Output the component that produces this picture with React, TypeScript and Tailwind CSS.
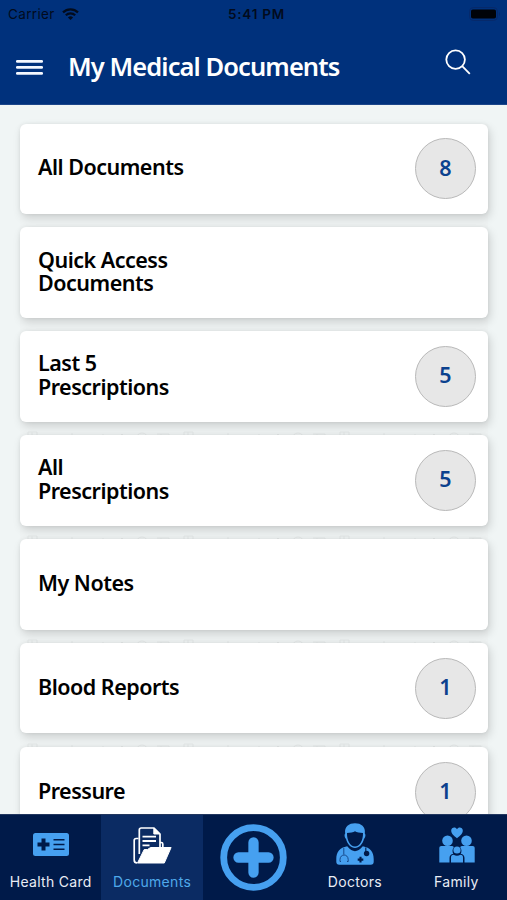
import { clsx } from "clsx";
import type { ReactNode } from "react";

type DocumentGroup = {
  lines: string[];
  count?: number;
};

const groups: DocumentGroup[] = [
  { lines: ["All Documents"], count: 8 },
  { lines: ["Quick Access", "Documents"] },
  { lines: ["Last 5", "Prescriptions"], count: 5 },
  { lines: ["All", "Prescriptions"], count: 5 },
  { lines: ["My Notes"] },
  { lines: ["Blood Reports"], count: 1 },
  { lines: ["Pressure"], count: 1 },
];

function StatusBar() {
  return (
    <div className="grid h-[28px] grid-cols-3 items-center pl-[8px] pr-[6px] font-['Inter','Liberation_Sans',sans-serif] text-[13.5px] text-[#020b1d]">
      <div className="flex items-center gap-[7px]">
        <span className="tracking-[0.35px]">Carrier</span>
        <svg width="17" height="12" viewBox="0 0 17 12" fill="none" stroke="#020b1d" strokeWidth="2.2">
          <path d="M1 4.4a10.8 10.8 0 0 1 15 0" />
          <path d="M3.8 7.2a6.8 6.8 0 0 1 9.4 0" />
          <path d="M8.5 12 5.9 9.4a3.8 3.8 0 0 1 5.2 0z" fill="#020b1d" stroke="none" />
        </svg>
      </div>
      <span className="pl-1 text-center font-semibold tracking-[0.75px]">5:41 PM</span>
      <svg className="justify-self-end" width="32" height="14" viewBox="0 0 32 14">
        <rect x="0.5" y="0.5" width="28" height="13" rx="4" fill="none" stroke="#06296a" />
        <rect x="2" y="2.5" width="25" height="9" rx="1.8" fill="#000308" />
        <path d="M30 5v4c1.3-.6 1.3-3.4 0-4z" fill="#06296a" />
      </svg>
    </div>
  );
}

function Header() {
  return (
    <header className="h-[105px] shrink-0 border-b border-[#1c468a] bg-[#00317c]">
      <StatusBar />
      <div className="flex h-[76px] items-center pl-4 pr-[36px]">
        <button className="mt-[2px]" aria-label="Menu">
          <svg width="27" height="15" viewBox="0 0 27 15" fill="#f4f8ff">
            <rect width="27" height="2.8" rx="1.2" />
            <rect y="6" width="27" height="2.8" rx="1.2" />
            <rect y="12" width="27" height="2.8" rx="1.2" />
          </svg>
        </button>
        <h1 className="ml-[25px] whitespace-nowrap text-[25.5px] font-semibold tracking-[-0.92px] text-white">
          My Medical Documents
        </h1>
        <button className="-mt-[8px] ml-auto" aria-label="Search">
          <svg width="26" height="26" viewBox="0 0 26 26" fill="none" stroke="white" strokeWidth="1.8">
            <circle cx="10.6" cy="10.6" r="9.3" />
            <path d="m17.2 17.2 7.6 7.6" />
          </svg>
        </button>
      </div>
    </header>
  );
}

// Faint medical line drawings that show between the lower cards
function Backdrop() {
  return (
    <svg className="absolute bottom-0 left-5" width="468" height="390" fill="none" stroke="#dde1e1">
      <defs>
        <pattern id="doodles" width="156" height="104" patternUnits="userSpaceOnUse">
          <path d="M8 8h9v14H8zM12 8v12M30 17l6-5 9 5M52 9v12M68 18h15v-8M94 18l8-8 7 8M137 10h12v12M141 10v10" />
          <circle cx="122" cy="15" r="6" />
        </pattern>
      </defs>
      <rect width="468" height="390" fill="url(#doodles)" stroke="none" />
    </svg>
  );
}

function DocumentCard({ group }: { group: DocumentGroup }) {
  return (
    <li className="flex h-[90.5px] shrink-0 items-center justify-between rounded-[6px] bg-white pl-[18px] pr-[12px] shadow-[0_0_4px_rgba(0,0,0,0.06),2px_4px_10px_rgba(0,0,0,0.15)]">
      <h2 className="-mt-[3.5px] text-[21.5px] font-semibold leading-[23.3px] tracking-[-0.5px] text-black">
        {group.lines.map((line) => (
          <span key={line} className="block whitespace-nowrap">
            {line}
          </span>
        ))}
      </h2>
      {group.count !== undefined && (
        <span className="flex size-[61px] items-center justify-center rounded-full border-[1.5px] border-[#b9b9b9] bg-[#e7e7e7] pb-[2px] text-[21.5px] font-semibold text-[#0b418e]">
          {group.count}
        </span>
      )}
    </li>
  );
}

function HealthCardIcon() {
  return (
    <svg className="-mt-[2px]" width="36" height="23" viewBox="0 0 36 23">
      <rect width="36" height="23" rx="2.5" fill="#46a0f0" />
      <path d="M10.5 5.5v12M4.5 11.5h12" stroke="#001a49" strokeWidth="4" />
      <path d="M20.5 6.8h11M20.5 11.5h11M20.5 16.2h11" stroke="#001a49" strokeWidth="1.5" />
    </svg>
  );
}

function DocumentsIcon() {
  return (
    <svg width="39" height="37" viewBox="0 0 39 37" fill="none" stroke="white" strokeWidth="1.7" strokeLinejoin="round">
      <path d="M5.5 11.5H3.2a2 2 0 0 0-2 2V33q0 3 3 3" />
      <path d="M6.3 27V3q0-2 2-2H21l6 6v14" />
      <path d="M20.8 1v6h6z" fill="white" strokeWidth="1" />
      <path d="M9.5 9.7H23M9.5 14H23M9.5 18.3h7" strokeWidth="1.8" />
      <path d="M27 15.5h1.3q1.5 0 1.5 1.5v4" />
      <path d="M11.2 22.5h3.3l3-2h20.6L31.3 36H4.5z" fill="white" strokeWidth="1" />
    </svg>
  );
}

function AddIcon() {
  return (
    <svg width="67" height="67" viewBox="0 0 67 67" fill="none" stroke="#46a0f0">
      <circle cx="33.5" cy="33.5" r="29.8" strokeWidth="6.8" />
      <path d="M33.5 18.5v30M18.5 33.5h30" strokeWidth="10.3" strokeLinecap="round" />
    </svg>
  );
}

function DoctorIcon() {
  return (
    <svg className="-mt-[2px]" width="38" height="42" viewBox="0 0 38 42">
      <path
        d="M11.2 23.3c3 3.4 5.2 4.9 7.8 4.9s4.8-1.5 7.8-4.900c7.500 1.400 10.900 5.600 10.900 12.700v2.700q0 3-3 3H3.300q-3 0-3-3V36c0-7.100 3.400-11.300 10.900-12.700z"
        fill="#46a0f0"
      />
      <path
        d="M9.2 10.5C8.2 3.5 13 .3 19 .3s10.800 3.200 9.800 10.200c1.200 1.200.5 4.500-.8 5.300-1.200 5.400-5 9.200-9 9.200s-7.800-3.800-9-9.200c-1.300-.8-2-4.100-.8-5.300z"
        fill="#46a0f0"
      />
      <path
        d="M11 10c3-.1 6.500-.8 8-1.700 1.500.9 5 1.600 8 1.700.2 7.300-3.300 13.600-8 13.600S10.800 17.300 11 10z"
        fill="#001a49"
      />
      <path
        d="M7.800 25v6.500M5 38.500H4v-2c.2-6 8-6 8.200 0v2H11"
        fill="none"
        stroke="#123f80"
        strokeWidth="0.9"
      />
      <path d="M29.800 24.5V29" stroke="#001a49" strokeWidth="1.1" />
      <circle cx="30.6" cy="30.5" r="2.7" fill="#001a49" />
      <path d="M24.5 33.8v5.6M21.7 36.6h5.6" stroke="#001a49" strokeWidth="2.1" />
    </svg>
  );
}

function FamilyIcon() {
  return (
    <svg className="ml-[2px]" width="36" height="36" viewBox="0 0 36 36" fill="#46a0f0">
      <path d="M18 11.2c-3-2.200-5.800-4.500-5.800-7.600C12.200.3 16.500-.7 18 2.200c1.500-2.900 5.800-1.900 5.800 1.400 0 3.100-2.800 5.400-5.800 7.600z" />
      <circle cx="8.5" cy="13.8" r="5.3" />
      <circle cx="27.5" cy="13.8" r="5.3" />
      <path d="M.3 35.500V20.800q0-1.800 2-1.800h10.500q1.500 0 2 1.200c-1.500 2-1.700 4.400-.5 6.500-2.500.500-3.800 2-3.800 4.300v4.500z" />
      <path d="M35.700 35.500V20.800q0-1.800-2-1.800H23.200q-1.500 0-2 1.200c1.500 2 1.700 4.400.5 6.500 2.500.500 3.800 2 3.800 4.300v4.500z" />
      <circle cx="18" cy="23" r="3.6" />
      <path d="M12 35.500v-5q0-2.700 2.500-2.700 3.500 1.700 7 0 2.500 0 2.500 2.700v5z" />
    </svg>
  );
}

type TabProps = {
  label: string;
  icon: ReactNode;
  active?: boolean;
};

function Tab({ label, icon, active }: TabProps) {
  return (
    <button className={clsx("flex flex-col items-center pt-[8px]", active && "bg-[#0b2b63]")}>
      <span className="flex h-[44px] items-center">{icon}</span>
      <span
        className={clsx(
          "mt-[6px] whitespace-nowrap text-[14px] leading-[18px] tracking-[0.3px]",
          active ? "text-[#4fa9ea]" : "text-[#e9edf5]"
        )}
      >
        {label}
      </span>
    </button>
  );
}

function TabBar() {
  return (
    <nav className="grid h-[86px] shrink-0 grid-cols-5 border-t border-[#22375f] bg-[#001a49] font-['Inter','Liberation_Sans',sans-serif]">
      <Tab label="Health Card" icon={<HealthCardIcon />} />
      <Tab label="Documents" icon={<DocumentsIcon />} active />
      <button className="flex items-center justify-center pl-px" aria-label="Add">
        <AddIcon />
      </button>
      <Tab label="Doctors" icon={<DoctorIcon />} />
      <Tab label="Family" icon={<FamilyIcon />} />
    </nav>
  );
}

export default function App() {
  return (
    <div className="flex h-[900px] w-[507px] flex-col overflow-hidden bg-[#f0f5f5] font-['Noto_Sans','Open_Sans',sans-serif]">
      <Header />
      <main className="relative min-h-0 flex-1 overflow-hidden pl-5 pr-[19px] pt-[18.5px]">
        <Backdrop />
        <ul className="relative flex flex-col gap-[13.4px] bg-[#edf0f0]/40">
          {groups.map((group) => (
            <DocumentCard key={group.lines.join(" ")} group={group} />
          ))}
        </ul>
      </main>
      <TabBar />
    </div>
  );
}
